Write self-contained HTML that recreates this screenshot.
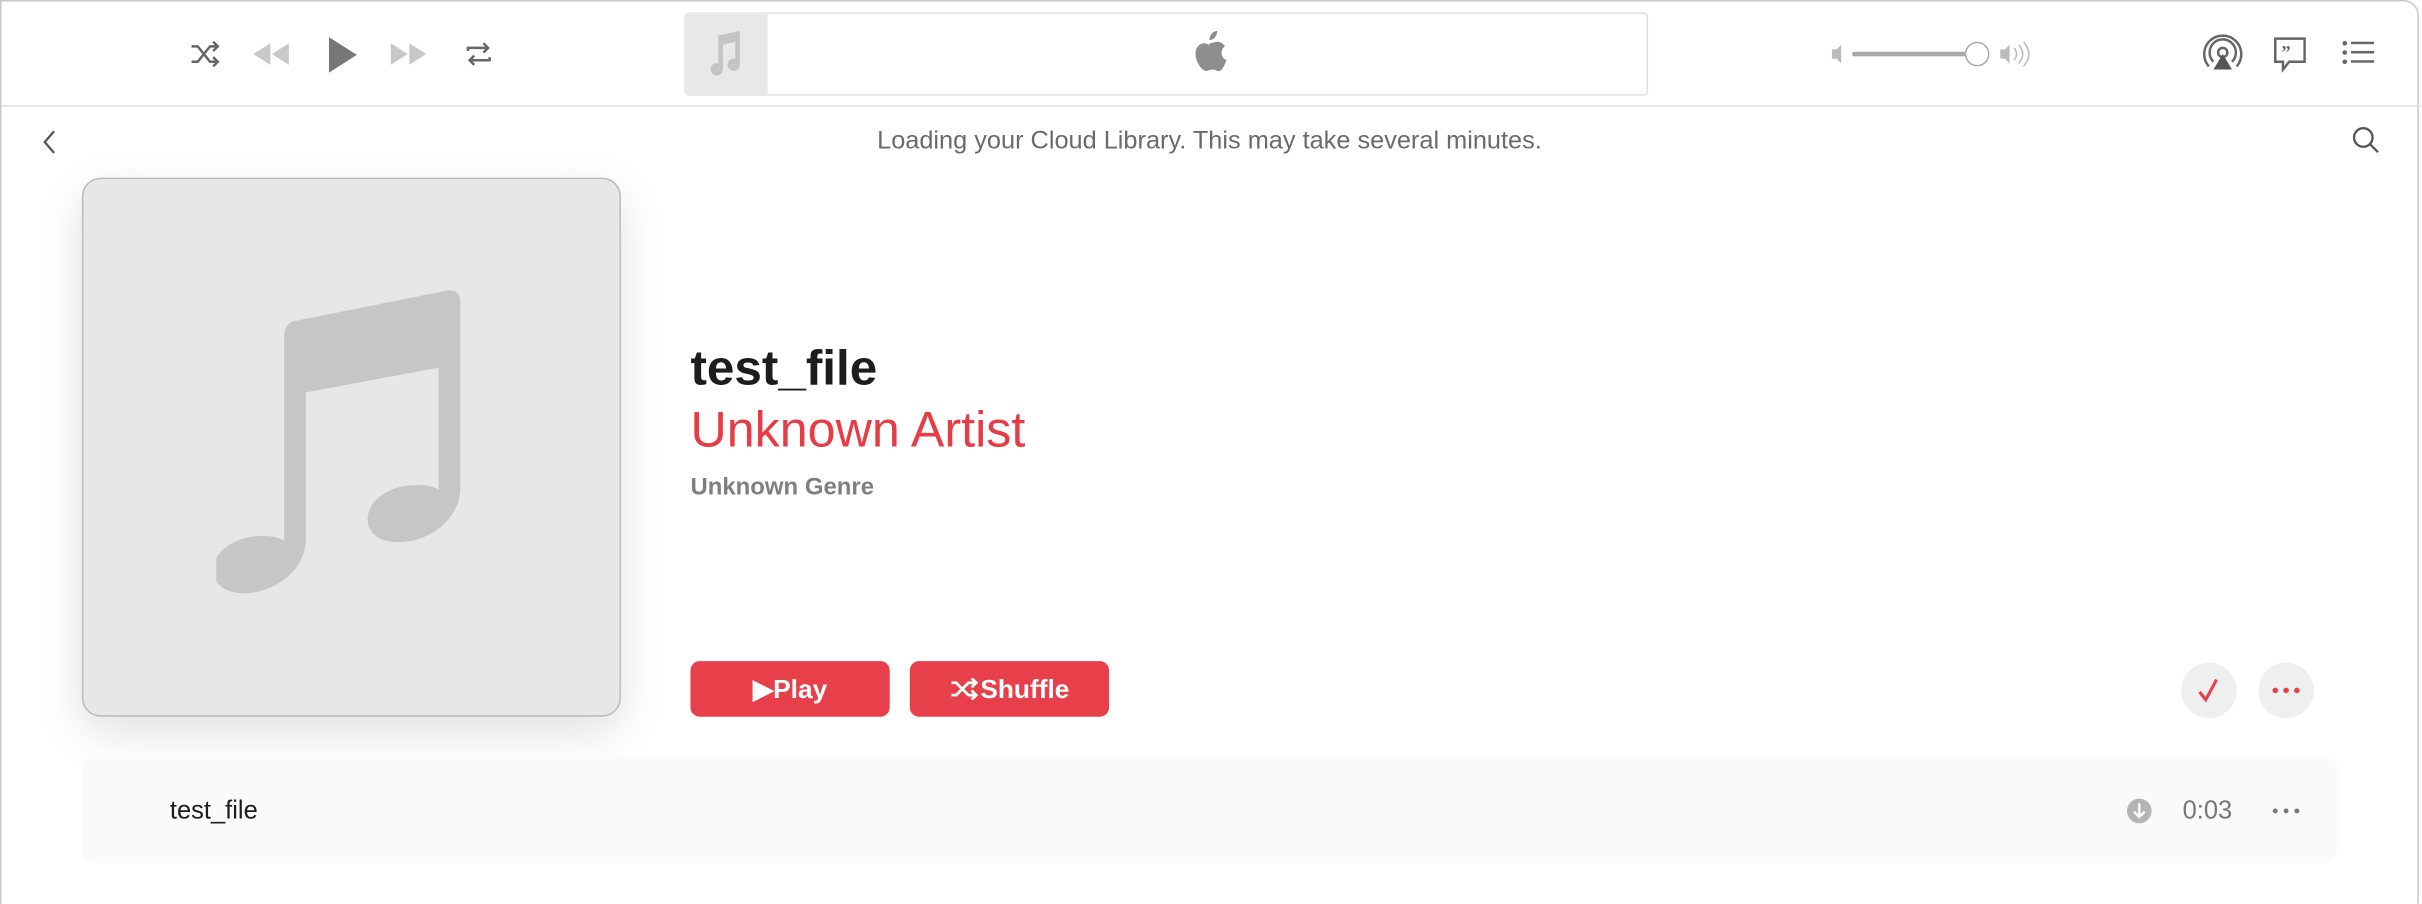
<!DOCTYPE html>
<html><head><meta charset="utf-8"><style>
html,body{margin:0;padding:0;background:#fff;overflow:hidden;width:2422px;height:904px}
#o{width:2422px;height:904px;overflow:hidden;position:relative}
#w{width:1568px;height:585px;position:absolute;left:0;top:0;transform:scale(1.54464);transform-origin:0 0;font-family:"Liberation Sans",sans-serif;background:#fff;overflow:hidden}
.abs{position:absolute}
.frame{left:0;top:0;width:1566px;height:600px;border:1px solid #c8c8c8;border-top-right-radius:10px;box-sizing:border-box}
</style></head><body><div id="o"><div id="w">
<div class="abs frame"></div>
<div class="abs" style="left:1px;top:68px;width:1566px;height:1px;background:#dedede"></div>
<svg class="abs" style="left:120px;top:22px" width="210" height="26" viewBox="0 0 210 26">
 <g fill="none" stroke="#666" stroke-width="1.6"><path d="M4 8h4l8 10h4M4 18h4l8-10h4"/><path d="M18 5l3 3-3 3M18 15l3 3-3 3" /></g>
 <path d="M55 6v14l-11-7zM67 6v14l-11-7z" fill="#c8c8c8"/>
 <path d="M93 2v23l18-11.5z" fill="#777"/>
 <path d="M133 6v14l11-7zM145 6v14l11-7z" fill="#c8c8c8"/>
 <g fill="none" stroke="#666" stroke-width="1.6"><path d="M183 11v-2h13M193 6l3 3-3 3M197 15v2h-13M187 14l-3 3 3 3"/></g>
</svg>
<div class="abs" style="left:443px;top:8px;width:624px;height:54px;border:1px solid #e0e0e0;border-radius:3px;box-sizing:border-box;background:#fff"></div>
<div class="abs" style="left:443px;top:8px;width:54px;height:54px;background:#e8e8e8;border-radius:3px 0 0 3px"></div>
<svg class="abs" style="left:455px;top:18px" width="30" height="34" viewBox="0 0 30 34"><path d="M10 5l14-3v22a4 4 0 1 1-3-4V9l-8 2v16a4 4 0 1 1-3-4z" fill="#c4c4c4"/></svg>
<svg class="abs" style="left:769px;top:20px" width="28" height="30" viewBox="0 0 28 30"><path d="M19 0c0 3-2 6-5 6 0-3 2-6 5-6zM14 8c2 0 3-1 5-1 2 0 4 1 5 3-3 2-3 7 1 9-1 3-3 7-5 7s-2-1-4-1-3 1-4 1c-3 0-7-6-7-11 0-5 3-7 6-7 1 0 2 1 3 1z" fill="#8e8e8e"/></svg>
<svg class="abs" style="left:1183px;top:25px" width="135" height="20" viewBox="0 0 135 20"><path d="M3 7h3l3-3v12l-3-3H3z" fill="#bbb"/><rect x="16" y="8.5" width="82" height="3" rx="1.5" fill="#aaa"/><circle cx="97" cy="10" r="7.5" fill="#fff" stroke="#aaa"/><path d="M112 7h3l3-3v12l-3-3h-3z" fill="#bbb"/><path d="M121 6q3 4 0 8M124 4q5 6 0 12M127 2q7 8 0 16" fill="none" stroke="#bbb" stroke-width="1"/></svg>
<svg class="abs" style="left:1426px;top:22px" width="115" height="26" viewBox="0 0 115 26">
 <g fill="none" stroke="#666" stroke-width="1.6"><circle cx="13" cy="12" r="3"/><path d="M7 18a8.5 8.5 0 1 1 12 0M4 21a12 12 0 1 1 18 0"/></g><path d="M13 13l-6 10h12z" fill="#555"/>
 <path d="M47 3h19v15h-10l-4 5v-5h-5z" fill="none" stroke="#666" stroke-width="1.6"/><text x="51" y="16" font-size="12" font-weight="bold" fill="#666" font-family="Liberation Serif">&#8221;</text>
 <g fill="#666"><circle cx="92" cy="6" r="1.5"/><circle cx="92" cy="12" r="1.5"/><circle cx="92" cy="18" r="1.5"/><rect x="96" y="5" width="15" height="1.6"/><rect x="96" y="11" width="15" height="1.6"/><rect x="96" y="17" width="15" height="1.6"/></g>
</svg>
<svg class="abs" style="left:25px;top:83px" width="14" height="18"><path d="M10 2l-6 7 6 7" fill="none" stroke="#555" stroke-width="1.5"/></svg>
<div class="abs" style="left:0;width:1566px;top:82px;text-align:center;font-size:16.4px;color:#6a6a6a">Loading your Cloud Library. This may take several minutes.</div>
<svg class="abs" style="left:1522px;top:81px" width="20" height="20"><circle cx="8" cy="8" r="6" fill="none" stroke="#555" stroke-width="1.5"/><path d="M12.5 12.5l5 5" stroke="#555" stroke-width="1.5"/></svg>
<div class="abs" style="left:53px;top:115px;width:349px;height:349px;background:#e7e7e7;border:1px solid #bcbcbc;border-radius:12px;box-sizing:border-box;box-shadow:0 10px 30px rgba(0,0,0,.12)"></div>
<svg class="abs" style="left:140px;top:188px" width="165" height="200" viewBox="0 0 165 200"><path d="M50 20l100-20q8-1 8 8v120c0 20-20 35-40 35-14 0-20-7-20-15 0-12 14-22 32-22 7 0 10 1 14 3V50l-86 16v95c0 20-20 35-40 35-14 0-20-7-20-15 0-12 14-22 32-22 7 0 10 1 14 3V30q0-8 6-10z" fill="#c6c6c6"/></svg>
<div class="abs" style="left:447px;top:220px;font-size:32px;font-weight:bold;color:#1d1d1d">test_file</div>
<div class="abs" style="left:447px;top:260px;font-size:32.5px;color:#e63c46">Unknown Artist</div>
<div class="abs" style="left:447px;top:307px;font-size:15.5px;font-weight:bold;color:#7f7f7f">Unknown Genre</div>
<div class="abs" style="left:447px;top:428px;width:129px;height:36px;background:#e8404a;border-radius:6px;color:#fff;font-weight:bold;font-size:17px;line-height:38px;text-align:center">&#9654;Play</div>
<div class="abs" style="left:589px;top:428px;width:129px;height:36px;background:#e8404a;border-radius:6px;color:#fff;font-weight:bold;font-size:17px;line-height:38px;text-align:center"><svg width="20" height="14" viewBox="0 0 20 14" style="vertical-align:-1px"><g fill="none" stroke="#fff" stroke-width="1.8"><path d="M1 3h3l8 8h4M1 11h3l8-8h4"/><path d="M14 0l3 3-3 3M14 8l3 3-3 3"/></g></svg>Shuffle</div>
<div class="abs" style="left:1412px;top:429px;width:36px;height:36px;border-radius:50%;background:#efefef"></div>
<svg class="abs" style="left:1420px;top:437px" width="20" height="20"><path d="M4 11l4 5 7-13" fill="none" stroke="#e8404a" stroke-width="2"/></svg>
<div class="abs" style="left:1462px;top:429px;width:36px;height:36px;border-radius:50%;background:#efefef"></div>
<svg class="abs" style="left:1468px;top:443px" width="24" height="8"><circle cx="5" cy="4" r="1.8" fill="#e8404a"/><circle cx="12" cy="4" r="1.8" fill="#e8404a"/><circle cx="19" cy="4" r="1.8" fill="#e8404a"/></svg>
<div class="abs" style="left:53px;top:490px;width:1460px;height:69px;background:#fafafa;border-radius:8px"></div>
<div class="abs" style="left:110px;top:516px;font-size:16.5px;color:#1d1d1d">test_file</div>
<svg class="abs" style="left:1376px;top:516px" width="18" height="18"><circle cx="9" cy="9" r="8" fill="#b4b4b4"/><path d="M9 4v9M5.5 9.5L9 13l3.5-3.5" fill="none" stroke="#fff" stroke-width="1.5"/></svg>
<div class="abs" style="left:1413px;top:516px;font-size:16.5px;color:#777">0:03</div>
<svg class="abs" style="left:1468px;top:521px" width="24" height="8"><circle cx="5" cy="4" r="1.6" fill="#777"/><circle cx="12" cy="4" r="1.6" fill="#777"/><circle cx="19" cy="4" r="1.6" fill="#777"/></svg>
</div></div></body></html>
